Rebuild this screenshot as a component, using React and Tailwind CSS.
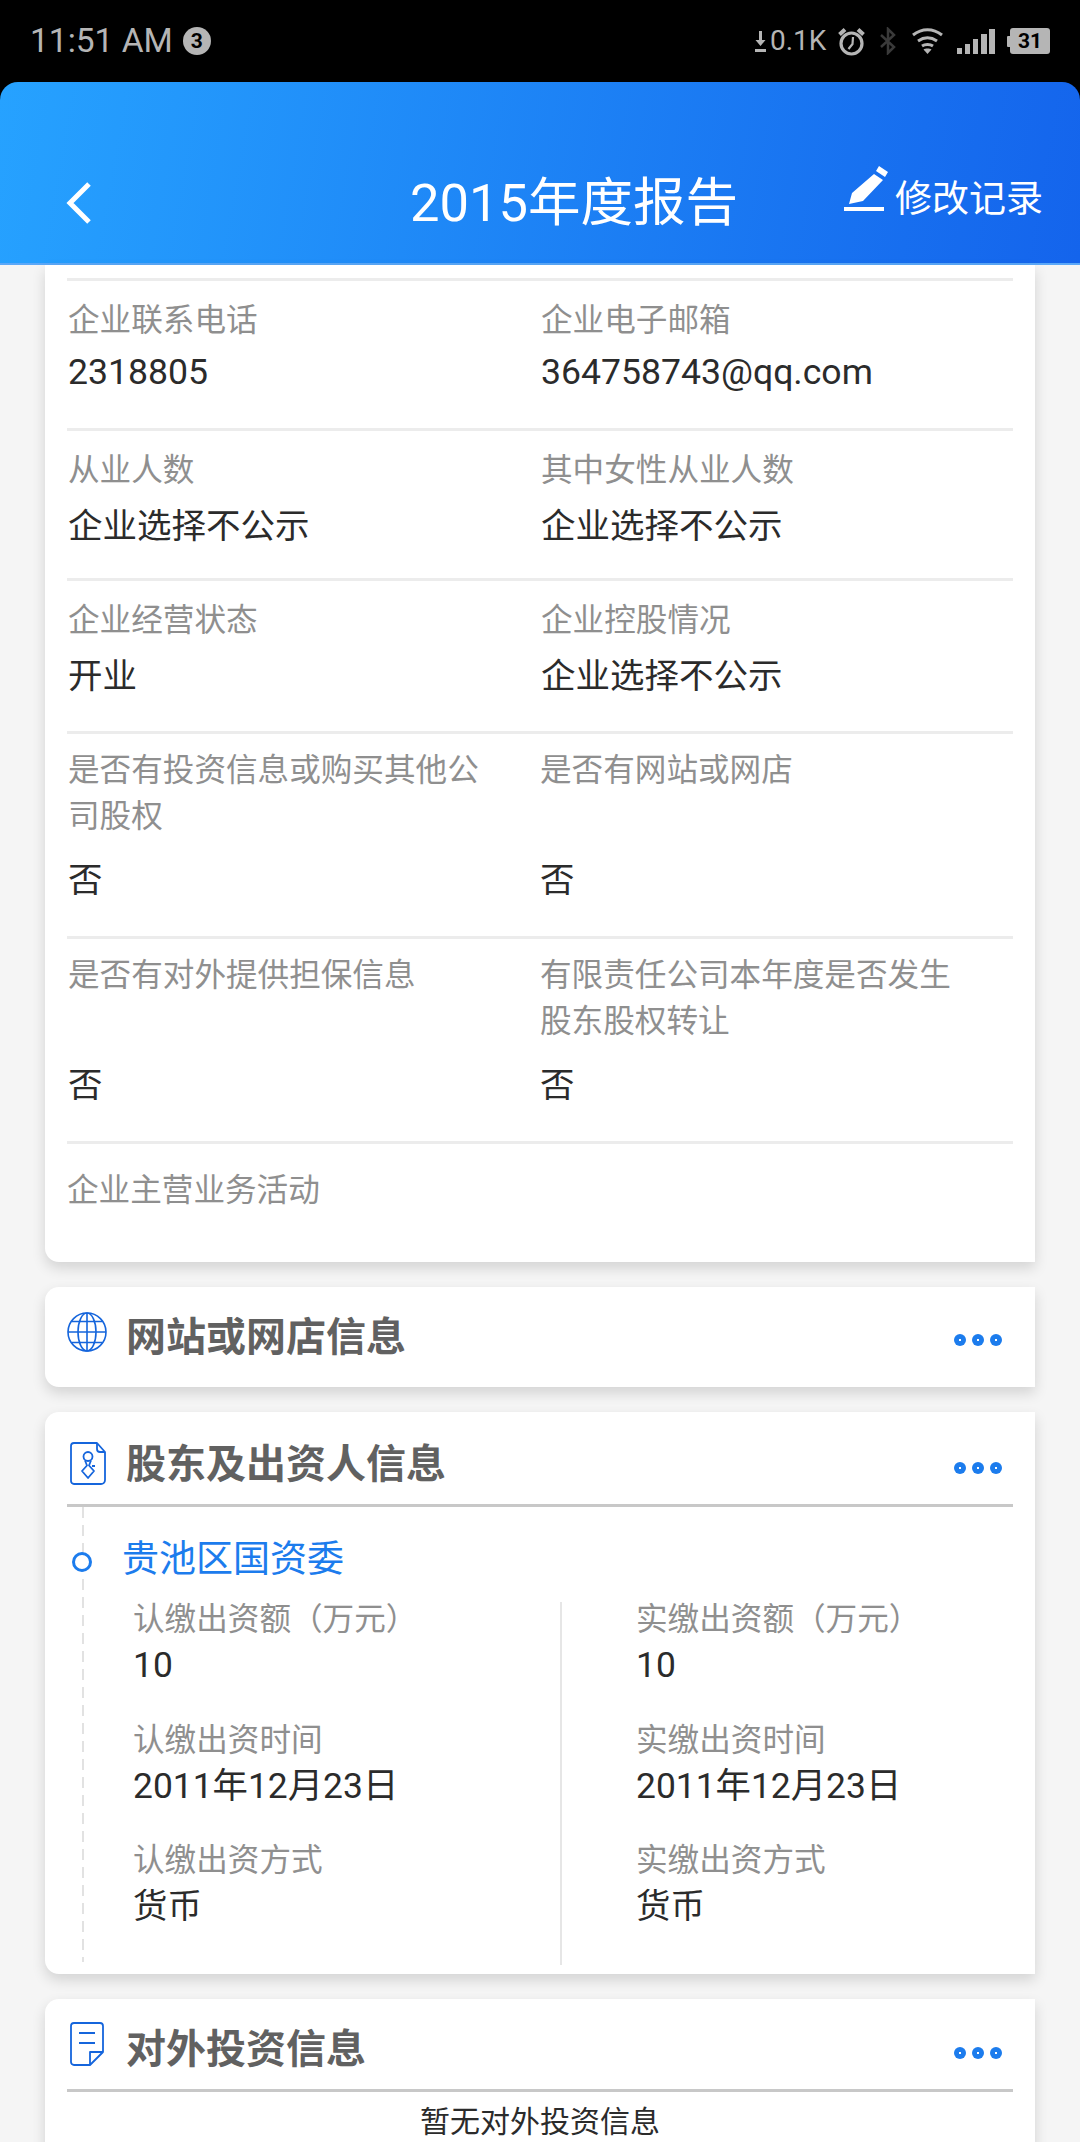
const FONT = 'font-["Roboto","Noto_Sans_CJK_SC",sans-serif]';

function Cell({ label, value, tall, right, latin }) {
  return (
    <div className={`pl-[1px] ${tall && right ? "-ml-[1px]" : ""}`}>
      <div className={`text-[31.6px] text-[#8f8f8f] ${tall ? "leading-[46px] pt-[14px] min-h-[106px] max-w-[425px]" : "leading-[40px] pt-[20px]"}`}>{label}</div>
      <div className={`text-[#2b2b2b] leading-[44px] ${latin ? "text-[35.6px] mt-[9px]" : "text-[34.5px]"} ${tall ? "mt-[18px]" : ""} ${!tall && !latin ? "mt-[13px]" : ""}`}>{value}</div>
    </div>
  );
}

function Row({ left, right, h, tall }) {
  return (
    <div className={`grid grid-cols-[473px_1fr] border-t-[3px] border-[#ececec] ${h}`}>
      <Cell {...left} tall={tall} />
      <Cell {...right} tall={tall} right />
    </div>
  );
}

function More() {
  return (
    <div className="flex gap-[6px]">
      {[0, 1, 2].map((i) => (
        <svg key={i} width="12" height="12" viewBox="0 0 12 12"><circle cx="6" cy="6" r="6" fill="#1c7ced" /><rect x="5" y="5" width="2" height="2" fill="#fff" /></svg>
      ))}
    </div>
  );
}

function Globe() {
  return (
    <svg width="40" height="40" viewBox="0 0 40 40" fill="none" stroke="#1565dc" strokeWidth="1.6">
      <circle cx="20" cy="20" r="19" />
      <ellipse cx="20" cy="20" rx="9" ry="19" />
      <path d="M20 1v38M1 20h38M4.500 9.500h31M4.500 30.500h31" />
    </svg>
  );
}

function DocTie() {
  return (
    <svg width="36" height="43" viewBox="0 0 36 43" fill="none" stroke="#1565dc" strokeWidth="1.8" strokeLinejoin="round">
      <path d="M4 1h23l8 9v28a4 4 0 0 1-4 4H4a3 3 0 0 1-3-3V4a3 3 0 0 1 3-3Z" />
      <path d="M27 1v6a3 3 0 0 0 3 3h5" />
      <circle cx="18" cy="14.500" r="4.500" />
      <path d="M15 18.500l2 5-5 5.500 6 7 6-7-5-5.500 2-5M22 24h3" />
    </svg>
  );
}

function DocNote() {
  return (
    <svg width="34" height="44" viewBox="0 0 34 44" fill="none" stroke="#1565dc" strokeWidth="1.8" strokeLinejoin="round">
      <path d="M20 43H4a3 3 0 0 1-3-3V4a3 3 0 0 1 3-3h26a3 3 0 0 1 3 3v26L20 43V30h13" />
      <path d="M9 11h16M9 21h16" />
    </svg>
  );
}

function SectionHead({ icon, title, iconClass, pb, dots }) {
  return (
    <div className={`flex items-start ${pb}`}>
      <div className={`w-[59px] shrink-0 ${iconClass}`}>{icon}</div>
      <div className="text-[40px] leading-[56px] font-bold text-[#616161]">{title}</div>
      <div className={`ml-auto mr-[11px] ${dots}`}><More /></div>
    </div>
  );
}

function Pair({ label, value, latin }) {
  return (
    <div className="h-[120.5px]">
      <div className="text-[31.6px] leading-[44px] pt-[1px] box-content text-[#8f8f8f]">{label}</div>
      <div className={`leading-[44px] text-[#2b2b2b] mt-[1px] ${latin ? "text-[35.4px]" : "text-[34.5px]"}`}>{value}</div>
    </div>
  );
}

export default function App() {
  return (
    <div className={`${FONT} w-[1080px] h-[2142px] overflow-hidden bg-[#f5f5f5]`}>
      <div className="bg-black">
        <div className="h-[82px] flex items-center justify-between pl-[30px] pr-[30px] text-[#b5b5b5]">
          <div className="flex items-center gap-[10px]">
            <span className="text-[33.500px] leading-none">11:51 AM</span>
            <span className="w-[28px] h-[28px] rounded-full bg-[#b5b5b5] text-black text-[21px] font-bold flex items-center justify-center leading-none">3</span>
          </div>
          <div className="flex items-center">
            <svg width="11" height="24" viewBox="0 0 11 24" fill="#b5b5b5"><path d="M4 2h3v9h3.500l-5 6-5-6H4ZM0 20h11v3H0Z" /></svg>
            <span className="text-[28px] leading-none ml-[4px] w-[55px]">0.1K</span>
            <svg className="ml-[13px]" width="27" height="29" viewBox="0 0 27 29" fill="none" stroke="#b5b5b5" strokeWidth="3.200"><circle cx="13.500" cy="16.500" r="10.500" /><path d="M15 10l-.5 7-4 5" strokeWidth="2.200" /><path d="M1.500 7.500 7 2.500M25.500 7.500 20 2.500" strokeWidth="4" /></svg>
            <svg className="ml-[14px]" width="18" height="28" viewBox="0 0 18 28" fill="none" stroke="#3a3a3a" strokeWidth="2.500"><path d="M2 8l13 12-6 6V2l6 6L2 20" /></svg>
            <svg className="ml-[14px]" width="33" height="26" viewBox="0 0 33 26" fill="none" stroke="#b5b5b5" strokeWidth="3"><path d="M2 7c9-7 20-7 29 0M7 13c6-4 13-4 19 0M11 18c3-2 8-2 11 0" /><path d="M16.500 26l-4-4.500c2-1.300 6-1.300 8 0Z" fill="#b5b5b5" stroke="none" /></svg>
            <svg className="ml-[13px]" width="38" height="25" viewBox="0 0 38 25" fill="#b5b5b5"><path d="M0 19h5v6H0ZM8 15h5v10H8ZM16 10h5v15h-5ZM24 5h6v20h-6ZM32 0h6v25h-6Z" /></svg>
            <span className="flex items-center ml-[12px]">
              <span className="w-[3px] h-[11px] bg-[#b5b5b5] rounded-l-[1px]" />
              <span className="w-[40px] h-[26px] rounded-[3px] bg-[#b5b5b5] text-black text-[21px] font-bold leading-[26px] text-center">31</span>
            </span>
          </div>
        </div>
        <div className="h-[183px] rounded-t-[18px] bg-linear-[100deg] from-[#26a2ff] to-[#1464ec] border-b-2 border-[#5ba8f8] flex items-start pl-[66px]">
          <svg className="mt-[100px] shrink-0" width="26" height="42" viewBox="0 0 26 42" fill="none" stroke="#fff" strokeWidth="5"><path d="M23 2 4 21l19 19" /></svg>
          <div className="w-[434px] pl-[318px] -mr-[1px] mt-[95px] text-[52.500px] leading-[52px] text-white whitespace-nowrap">2015年度报告</div>
          <div className="ml-[319px] mt-[83px] flex items-start text-white">
            <svg width="45" height="47" viewBox="0 0 45 47" fill="#fff"><path d="M35 1l9 6-3 5-9-6ZM30 9l9 6-20 21-14 3 3-11ZM0 42h40v4H0Z" /></svg>
            <span className="text-[37px] leading-[50px] ml-[6px] mt-[10px] whitespace-nowrap">修改记录</span>
          </div>
        </div>
      </div>

      <div className="flex flex-col gap-[25px] pl-[45px] pr-[45px]">
        <div className="bg-white rounded-bl-[14px] shadow-[0_6px_14px_rgba(0,0,0,0.14)] px-[22px] pt-[13px] h-[997px]">
          <Row h="h-[150px]" left={{ label: "企业联系电话", value: "2318805", latin: true }} right={{ label: "企业电子邮箱", value: "364758743@qq.com", latin: true }} />
          <Row h="h-[150px]" left={{ label: "从业人数", value: "企业选择不公示" }} right={{ label: "其中女性从业人数", value: "企业选择不公示" }} />
          <Row h="h-[153px]" left={{ label: "企业经营状态", value: "开业" }} right={{ label: "企业控股情况", value: "企业选择不公示" }} />
          <Row h="h-[205px]" tall left={{ label: "是否有投资信息或购买其他公司股权", value: "否" }} right={{ label: "是否有网站或网店", value: "否" }} />
          <Row h="h-[205px]" tall left={{ label: "是否有对外提供担保信息", value: "否" }} right={{ label: "有限责任公司本年度是否发生股东股权转让", value: "否" }} />
          <div className="border-t-[3px] border-[#ececec] text-[31.6px] leading-[40px] pt-[27px] text-[#8f8f8f]">企业主营业务活动</div>
        </div>

        <div className="bg-white rounded-l-[14px] shadow-[0_6px_14px_rgba(0,0,0,0.14)] px-[22px] pt-[23px] h-[100px]">
          <SectionHead icon={<Globe />} title="网站或网店信息" iconClass="pt-[2px]" dots="mt-[24px]" />
        </div>

        <div className="bg-white rounded-l-[14px] shadow-[0_6px_14px_rgba(0,0,0,0.14)] px-[22px] pt-[25px] h-[562px]">
          <SectionHead icon={<DocTie />} title="股东及出资人信息" iconClass="pl-[3px] pt-[5px]" dots="mt-[25px]" pb="pb-[11px]" />
          <div className="border-t-[3px] border-[#c8c8c8]" />
          <div className="relative ml-[15px] pl-[40px] h-[455px]">
            <span className="absolute left-0 top-0 w-[2px] h-full bg-[repeating-linear-gradient(to_bottom,#e2e2e2_0_11px,transparent_11px_18px)]" />
            <span className="absolute left-[-10px] top-[45px] w-[20px] h-[20px] rounded-full border-[3px] border-[#1c7ced] bg-white" />
            <div className="text-[37px] leading-[52px] text-[#1c7ced] pt-[27px] box-content">贵池区国资委</div>
            <div className="flex mt-[11px] ml-[11px]">
              <div className="w-[427px]">
                <Pair label="认缴出资额（万元）" value="10" latin />
                <Pair label="认缴出资时间" value="2011年12月23日" latin />
                <Pair label="认缴出资方式" value="货币" />
              </div>
              <div className="w-[2px] h-[363px] mt-[5px] bg-[#e6e6e6]" />
              <div className="pl-[74px]">
                <Pair label="实缴出资额（万元）" value="10" latin />
                <Pair label="实缴出资时间" value="2011年12月23日" latin />
                <Pair label="实缴出资方式" value="货币" />
              </div>
            </div>
          </div>
        </div>

        <div className="bg-white rounded-l-[14px] shadow-[0_6px_14px_rgba(0,0,0,0.14)] px-[22px] pt-[23px] h-[200px]">
          <SectionHead icon={<DocNote />} title="对外投资信息" iconClass="pl-[3px]" dots="mt-[25px]" pb="pb-[11px]" />
          <div className="border-t-[3px] border-[#c8c8c8]" />
          <div className="text-[30px] leading-[40px] text-[#2b2b2b] text-center pt-[10px]">暂无对外投资信息</div>
        </div>
      </div>
    </div>
  );
}
